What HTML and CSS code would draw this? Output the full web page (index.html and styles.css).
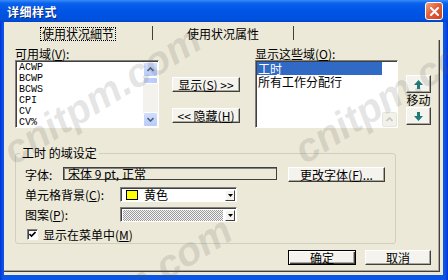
FILE: index.html
```html
<!DOCTYPE html>
<html lang="zh-CN">
<head>
  <meta charset="UTF-8" />
  <title>详细样式</title>
  <link rel="stylesheet" href="styles.css">
</head>
<body>

  <div class="window">
    <!-- Title bar -->
    <div class="titlebar">
      <span class="title">详细样式</span>
      <div class="close-btn">
        <svg width="9" height="9" viewBox="0 0 9 9"><path d="M1 1L8 8M8 1L1 8" stroke="#fff" stroke-width="2" stroke-linecap="square"/></svg>
      </div>
    </div>

    <div class="client">
      <div class="tabs">
        <div class="tab tab-first"><span class="focus">使用状况細节</span></div>
        <div class="tab tab-second">使用状况属性</div>
      </div>

      <div class="panel">
        <div class="fields">
          <!-- available fields -->
          <div class="col-avail">
            <div class="label">可用域(<u>V</u>):</div>
            <div class="listbox">
              <ul class="items mono">
                <li>ACWP</li>
                <li>BCWP</li>
                <li>BCWS</li>
                <li>CPI</li>
                <li>CV</li>
                <li>CV%</li>
              </ul>
              <div class="scrollbar">
                <div class="sb-btn">
                  <svg width="7" height="5" viewBox="0 0 7 5"><path d="M0.5 4L3.5 1L6.5 4" fill="none" stroke="#4d6185" stroke-width="1.6"/></svg>
                </div>
                <div class="sb-thumb"></div>
                <div class="sb-btn">
                  <svg width="7" height="5" viewBox="0 0 7 5"><path d="M0.5 1L3.5 4L6.5 1" fill="none" stroke="#4d6185" stroke-width="1.6"/></svg>
                </div>
              </div>
            </div>
          </div>

          <div class="col-swap">
            <div class="btn">显示(<u>S</u>) &gt;&gt;</div>
            <div class="btn">&lt;&lt; 隐藏(<u>H</u>)</div>
          </div>

          <!-- shown fields -->
          <div class="col-shown">
            <div class="label">显示这些域(<u>O</u>):</div>
            <div class="listbox">
              <ul class="items">
                <li class="selected">工时</li>
                <li>所有工作分配行</li>
              </ul>
              <div class="scrollbar light">
                <div class="sb-btn off">
                  <svg width="7" height="5" viewBox="0 0 7 5"><path d="M0.5 4L3.5 1L6.5 4" fill="none" stroke="#c9c7ba" stroke-width="1.6"/></svg>
                </div>
              </div>
            </div>
          </div>

          <div class="col-order">
            <div class="btn move-btn">
              <svg width="9" height="9" viewBox="0 0 9 9"><polygon points="4.5,0 9,5 6,5 6,9 3,9 3,5 0,5" fill="#1f7b7b"/></svg>
            </div>
            <div class="move-label">移动</div>
            <div class="btn move-btn">
              <svg width="9" height="9" viewBox="0 0 9 9"><polygon points="4.5,9 9,4 6,4 6,0 3,0 3,4 0,4" fill="#1f7b7b"/></svg>
            </div>
          </div>
        </div>

        <fieldset class="group">
          <legend>工时 的域设定</legend>
          <div class="row">
            <span class="row-label narrow">字体:</span>
            <div class="font-field">宋体 9 pt, 正常</div>
            <div class="btn font-btn">更改字体(<u>F</u>)...</div>
          </div>
          <div class="row">
            <span class="row-label">单元格背景(<u>C</u>):</span>
            <div class="combo">
              <span class="swatch"></span>
              <span class="combo-text">黄色</span>
              <span class="drop"><svg width="5" height="3" viewBox="0 0 5 3"><polygon points="0,0 5,0 2.5,3" fill="#000"/></svg></span>
            </div>
          </div>
          <div class="row">
            <span class="row-label">图案(<u>P</u>):</span>
            <div class="combo">
              <span class="pattern"></span>
              <span class="drop"><svg width="5" height="3" viewBox="0 0 5 3"><polygon points="0,0 5,0 2.5,3" fill="#000"/></svg></span>
            </div>
          </div>
          <div class="row check-row">
            <span class="checkbox">
              <svg width="7" height="7" viewBox="0 0 7 7"><path d="M0.5 3L2.5 5L6.5 1" fill="none" stroke="#000" stroke-width="1.6"/></svg>
            </span>
            <span>显示在菜单中(<u>M</u>)</span>
          </div>
        </fieldset>

        <div class="footer">
          <div class="btn default ok-btn">确定</div>
          <div class="btn cancel-btn">取消</div>
        </div>
      </div>
    </div>

    <!-- site watermark -->
    <span class="watermark wm1">cnitpm.com</span>
    <span class="watermark wm2">cnitpm.com</span>
    <span class="watermark wm3">cnitpm.com</span>
  </div>

</body>
</html>
```

FILE: styles.css
```css
* {
  box-sizing: border-box;
}

body {
  margin: 0;
  font-family: "Noto Sans CJK SC", "Liberation Sans", sans-serif;
  font-size: 12px;
  color: #000;
  background: #fff;
}

u {
  text-decoration-thickness: 1px;
  text-underline-offset: 1px;
}

.window {
  position: relative;
  width: 448px;
  height: 280px;
  display: flex;
  flex-direction: column;
  background: linear-gradient(90deg, #0831d9, #0a55e6 3px, #0a55e6 calc(100% - 3px), #0831d9);
  overflow: hidden;
}

.titlebar {
  height: 22px;
  display: flex;
  align-items: center;
  justify-content: space-between;
  padding: 0 5px 0 7px;
  background: linear-gradient(#3a8cf6, #0a61ec 15%, #0055e5 50%, #0052e0 85%, #0044c8);
}

.title {
  color: #fff;
  font-weight: bold;
  font-size: 12px;
  letter-spacing: 0.5px;
  text-shadow: 1px 1px 0 #0a2a80;
}

.close-btn {
  width: 18px;
  height: 18px;
  border: 1px solid #fff;
  border-radius: 3px;
  background: linear-gradient(135deg, #f2a080, #e2603c 45%, #cc4420);
  display: flex;
  align-items: center;
  justify-content: center;
}

.client {
  flex: 1;
  margin: 0 5px 5px 4px;
  background: #ece9d8;
  display: flex;
  flex-direction: column;
}

/* tabs */
.tabs {
  display: flex;
  height: 18px;
}

.tab {
  margin-top: 4px;
  height: 14px;
  line-height: 15px;
  text-align: center;
  border-right: 1px solid #404040;
}

.tab-first {
  width: 149px;
}

.tab-second {
  width: 141px;
}

.focus {
  display: inline-block;
  line-height: 12px;
  margin-top: 1px;
  padding: 0 1px;
  outline: 1px dotted #000;
}

.panel {
  flex: 1;
  margin: 0 3px 3px 0;
  padding: 7px 0 0 11px;
  border-right: 1px solid #404040;
  border-bottom: 1px solid #404040;
  box-shadow: inset -1px -1px 0 #aca899;
}

.fields {
  display: flex;
  height: 83px;
}

.label {
  height: 13px;
  line-height: 13px;
  white-space: nowrap;
}

.col-avail {
  width: 144px;
}

.listbox {
  height: 68px;
  display: flex;
  padding: 1px 0 0 1px;
  overflow: hidden;
  background: #fff;
  border: 1px solid;
  border-color: #808080 #fff #fff #808080;
  box-shadow: inset 1px 1px 0 #404040;
}

.items {
  flex: 1;
  list-style: none;
  margin: 0;
  padding: 0;
  line-height: 13px;
  white-space: nowrap;
}

.items li {
  padding-left: 1px;
}

.mono {
  font-family: "Liberation Mono", monospace;
  font-size: 10px;
  line-height: 11px;
}

.mono li {
  padding-left: 2px;
}

.selected {
  background: #316ac5;
  color: #fff;
}

.scrollbar {
  width: 15px;
  display: flex;
  flex-direction: column;
  background: #f3f2ec;
}

.scrollbar.light {
  background: #fff;
}

.sb-btn {
  height: 15px;
  display: flex;
  align-items: center;
  justify-content: center;
  border: 1px solid #fff;
  border-radius: 2px;
  background: linear-gradient(#d2defc, #b8ccf8);
}

.sb-btn:last-child {
  margin-top: auto;
}

.sb-btn.off {
  background: #f2f1ea;
  border-color: #e8e6dc;
}

.sb-thumb {
  height: 7px;
  border: 1px solid #fff;
  border-radius: 2px;
  background: linear-gradient(90deg, #c6d5fb, #b5c9f7);
}

.col-swap {
  width: 68px;
  margin-left: 13px;
  padding-top: 30px;
  display: flex;
  flex-direction: column;
  gap: 16px;
}

.btn {
  height: 15px;
  line-height: 13px;
  text-align: center;
  white-space: nowrap;
  background: #f4f3ee;
  border: 1px solid;
  border-color: #fff #404040 #404040 #fff;
  box-shadow: inset -1px -1px 0 #aca899;
}

.col-shown {
  width: 143px;
  margin-left: 15px;
}

.col-order {
  width: 27px;
  margin-left: 7px;
  padding-top: 28px;
  display: flex;
  flex-direction: column;
  align-items: center;
}

.move-btn {
  width: 25px;
  height: 18px;
  display: flex;
  align-items: center;
  justify-content: center;
}

.move-label {
  line-height: 14px;
  white-space: nowrap;
}

/* group box */
.group {
  width: 381px;
  margin: 17px 0 0 0;
  padding: 8px 0 2px 9px;
  border: 1px solid #d0d0bf;
  border-radius: 3px;
}

.group legend {
  margin-left: -5px;
  padding: 0 2px;
  line-height: 12px;
}

.row {
  display: flex;
  align-items: center;
  height: 15px;
  white-space: nowrap;
}

.row + .row {
  margin-top: 5px;
}

.row-label {
  width: 95px;
}

.row-label.narrow {
  width: 38px;
}

.font-field {
  width: 214px;
  height: 13px;
  line-height: 11px;
  padding-left: 4px;
  align-self: flex-start;
  border: 1px solid #404040;
  box-shadow: inset 1px 1px 0 #808080;
}

.font-btn {
  width: 97px;
  margin-left: 11px;
}

.combo {
  width: 117px;
  height: 15px;
  display: flex;
  align-items: center;
  padding: 0 1px 0 3px;
  background: #fff;
  border: 1px solid;
  border-color: #808080 #fff #fff #808080;
  box-shadow: inset 1px 1px 0 #404040;
}

.swatch {
  width: 12px;
  height: 10px;
  margin: 1px 6px 0 2px;
  background: #ffff00;
  border: 1px solid #000;
}

.combo-text {
  line-height: 12px;
}

.pattern {
  flex: 1;
  height: 11px;
  margin: 1px 2px 0 -1px;
  background: repeating-conic-gradient(#9a9a9a 0 25%, #f4f4f4 0 50%) 0 0 / 2px 2px;
}

.drop {
  width: 10px;
  height: 11px;
  margin-left: auto;
  margin-top: 1px;
  display: flex;
  align-items: center;
  justify-content: center;
  background: #f4f3ee;
  border: 1px solid;
  border-color: #fff #404040 #404040 #fff;
}

.check-row {
  height: 14px;
  padding-left: 2px;
}

.checkbox {
  width: 11px;
  height: 11px;
  margin-right: 5px;
  display: flex;
  align-items: center;
  justify-content: center;
  background: #fff;
  border: 1px solid;
  border-color: #808080 #fff #fff #808080;
  box-shadow: inset 1px 1px 0 #404040;
}

.footer {
  display: flex;
  justify-content: flex-end;
  gap: 9px;
  margin-top: 6px;
  padding-right: 8px;
}

.ok-btn {
  width: 68px;
}

.cancel-btn {
  width: 66px;
}

.btn.default {
  border-color: #000;
  box-shadow: inset 1px 1px 0 #fff, inset -1px -1px 0 #404040, inset -2px -2px 0 #aca899;
}

.watermark {
  position: absolute;
  font: italic bold 40px/40px "Liberation Sans", sans-serif;
  color: rgba(90, 90, 90, 0.17);
  transform: rotate(-32deg);
  transform-origin: 0 0;
  white-space: nowrap;
  pointer-events: none;
}

.wm1 {
  left: -4px;
  top: 137px;
}

.wm2 {
  left: 287px;
  top: 136px;
}

.wm3 {
  left: 27px;
  top: 328px;
}
```
